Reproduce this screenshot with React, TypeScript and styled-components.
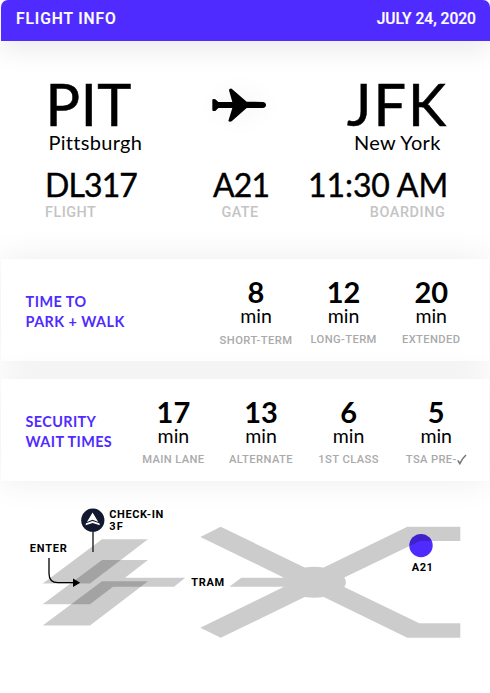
import React from "react";
import styled, { createGlobalStyle } from "styled-components";

const GlobalStyle = createGlobalStyle`
  * { box-sizing: border-box; }
  body { margin: 0; background: #fff; }
`;

const Screen = styled.main`
  width: 490px;
  height: 693px;
  overflow: hidden;
  background: #fff;
  color: #000;
  font-family: Lato, sans-serif;
  display: flex;
  flex-direction: column;
`;

const Header = styled.header`
  flex: none;
  height: 41px;
  padding: 0 13.5px 3px 15.5px;
  margin: 0 0.5px;
  display: flex;
  align-items: center;
  justify-content: space-between;
  background: #4f2bff;
  border-radius: 7px 7px 0 0;
  box-shadow: 0 10px 26px rgba(0, 0, 0, 0.08);
  color: #fff;
`;

const HeaderText = styled.span<{ $spacing: number }>`
  font: 500 15.6px/18px Roboto, sans-serif;
  letter-spacing: ${(p) => p.$spacing}px;
  -webkit-text-stroke: 0.2px currentColor;
`;

const Trip = styled.section`
  flex: none;
  height: 218px;
  padding: 34px 42px 0 45px;
  display: flex;
  flex-direction: column;
`;

const TripRow = styled.div<{ $height: number }>`
  height: ${(p) => p.$height}px;
  display: grid;
  grid-template-columns: 153px 84px 1fr;
  align-items: start;
`;

const Airport = styled.div`
  display: flex;
  flex-direction: column;
  justify-self: start;

  &:last-child {
    justify-self: end;
  }
`;

const Code = styled.span<{ $spacing: number; $indent: number }>`
  font-size: 57.5px;
  line-height: 58px;
  letter-spacing: ${(p) => p.$spacing}px;
  margin-left: ${(p) => p.$indent}px;
  white-space: nowrap;
  -webkit-text-stroke: 0.6px currentColor;
`;

const City = styled.span<{ $spacing: number; $indent: number }>`
  font-size: 20px;
  line-height: 18px;
  letter-spacing: ${(p) => p.$spacing}px;
  margin-left: ${(p) => p.$indent}px;
  white-space: nowrap;
`;

const PlaneHalo = styled.div`
  width: 80px;
  height: 60px;
  margin-left: 2px;
  background: radial-gradient(closest-side, rgba(0, 0, 0, 0.022), rgba(0, 0, 0, 0));
`;

const Detail = styled.div<{ $align: "flex-start" | "center" | "flex-end" }>`
  display: flex;
  flex-direction: column;
  align-items: ${(p) => p.$align};
`;

const DetailValue = styled.span<{ $spacing: number; $indent?: number }>`
  font-size: 32px;
  line-height: 38px;
  letter-spacing: ${(p) => p.$spacing}px;
  margin-left: ${(p) => p.$indent ?? 0}px;
  white-space: nowrap;
  -webkit-text-stroke: 0.4px currentColor;
`;

const DetailLabel = styled.span<{ $spacing: number; $end?: number }>`
  font: 500 14.4px/18px Roboto, sans-serif;
  color: #c4c4c4;
  letter-spacing: ${(p) => p.$spacing}px;
  margin-right: ${(p) => p.$end ?? 0}px;
`;

const Card = styled.section<{ $end: number }>`
  flex: none;
  height: 102px;
  margin: 0 1px 18px;
  padding: 0 ${(p) => p.$end}px 0 24.5px;
  display: flex;
  justify-content: space-between;
  background: #fff;
  box-shadow: 0 0 32px rgba(0, 0, 0, 0.075);
`;

const CardTitle = styled.h2`
  margin: 33px 0 0;
  font-size: 14.4px;
  line-height: 20px;
  font-weight: 700;
  color: #4f2bff;
  white-space: nowrap;
`;

const TitleLine = styled.span<{ $spacing: number }>`
  display: block;
  letter-spacing: ${(p) => p.$spacing}px;
`;

const Stats = styled.div`
  display: flex;
`;

const Stat = styled.div`
  width: 87.6px;
  padding-top: 19px;
  display: flex;
  flex-direction: column;
  align-items: center;
`;

const StatValue = styled.strong`
  font-size: 29px;
  line-height: 28px;
  font-weight: 700;
`;

const StatUnit = styled.span`
  font-size: 19.5px;
  line-height: 20px;
`;

const StatLabel = styled.span<{ $drop: number; $spacing: number }>`
  margin-top: ${(p) => 7 + p.$drop}px;
  font: 500 11.2px/14px Roboto, sans-serif;
  letter-spacing: ${(p) => p.$spacing}px;
  color: #aaa;
  white-space: nowrap;
`;

const Check = styled.svg`
  width: 10px;
  height: 11px;
  vertical-align: -2px;
`;

const MapArea = styled.svg`
  display: block;
  flex: none;
  width: 490px;
  height: 150px;
  margin-top: -4px;
`;

const MapLabel = styled.text`
  font: 700 11px Roboto, sans-serif;
  fill: #000;
`;

type StatData = { value: number; label: string; spacing: number; drop?: number; check?: boolean };

const walkTimes: StatData[] = [
  { value: 8, label: "SHORT-TERM", spacing: 0.45, drop: 1 },
  { value: 12, label: "LONG-TERM", spacing: 0.4 },
  { value: 20, label: "EXTENDED", spacing: 0.4 },
];

const waitTimes: StatData[] = [
  { value: 17, label: "MAIN LANE", spacing: 0.35 },
  { value: 13, label: "ALTERNATE", spacing: 0.45 },
  { value: 6, label: "1ST CLASS", spacing: 0.4 },
  { value: 5, label: "TSA PRE-", spacing: 0.35, check: true },
];

const StatList = ({ items }: { items: StatData[] }) => (
  <Stats>
    {items.map((s) => (
      <Stat key={s.label}>
        <StatValue>{s.value}</StatValue>
        <StatUnit>min</StatUnit>
        <StatLabel $drop={s.drop ?? 0} $spacing={s.spacing}>
          {s.label}
          {s.check && (
            <Check viewBox="0 0 10 11">
              <path d="M0.8 6.4 2.8 9.6 C4.6 6 6.4 3.2 9 1" fill="none" stroke="#777" strokeWidth="1.6" />
            </Check>
          )}
        </StatLabel>
      </Stat>
    ))}
  </Stats>
);

const Plane = () => (
  <PlaneHalo>
    <svg width="80" height="60" viewBox="0 0 240 180">
      <path d="M37 75 Q37 72 41 72 L46 73 L55 81 L97 81 L87 46 Q87 40 95 41 L140 80 L188 81 Q198 82 198 90 Q198 98 188 99 L140 99 L95 139 Q89 142 85 138 L97 99 L55 99 L46 108 L40 108 Q37 108 37 104 Z" />
    </svg>
  </PlaneHalo>
);

const TerminalMap = () => (
  <MapArea viewBox="0 495 490 150">
    <circle cx="421" cy="545.6" r="11.7" fill="#4f2bff" />
    <path
      fillOpacity="0.2"
      d="M220.7 526.8 L304.7 567.4 A31.5 15.2 0 0 1 323.7 567.4 L407.3 526.8 H460.3 V541 H420 L344.3 577.6 A31 15 0 0 1 344.3 587 L419.3 623.3 H460.3 V637.8 H407.3 L323.7 597 A31.5 15.2 0 0 1 304.7 597 L220.7 637.8 L200.3 627.7 L284 586.7 H229.3 L241.3 577.7 H284 L200.3 536.9 Z"
    />
    <g fillOpacity="0.2">
      <path d="M102 539.2 H148 L90 583.6 H42.7 Z" />
      <path d="M102 560 H148 L125 577.7 H185.3 L174 586.7 H113 L90 604.3 H42.7 Z" />
      <path d="M102 581.2 H148 L90 625.4 H42.7 Z" />
    </g>
    <path d="M93 530 V552" stroke="#222" strokeWidth="1.4" />
    <circle cx="92.8" cy="520.2" r="11.6" fill="#111830" />
    <path d="M92.6 512.6 L98.3 521.9 L92.6 519.7 L86.9 521.9 Z M86 523.3 L92.6 520.9 L99.4 523.3 L99.8 525.2 L92.6 523 L85.6 525.2 Z" fill="#fff" />
    <path d="M49 558 V573.5 Q49 582.7 58 582.7 H74" fill="none" stroke="#000" strokeWidth="1.3" />
    <path d="M73 578.4 L80.2 582.7 L73 587 Z" />
    <MapLabel x="109.3" y="517.7" textLength="54">CHECK-IN</MapLabel>
    <MapLabel x="109.3" y="530" textLength="13.5">3F</MapLabel>
    <MapLabel x="29.8" y="551.7" textLength="37">ENTER</MapLabel>
    <MapLabel x="191.2" y="585.8" textLength="33">TRAM</MapLabel>
    <MapLabel x="411.8" y="570.6" textLength="21">A21</MapLabel>
  </MapArea>
);

export default function App() {
  return (
    <Screen>
      <GlobalStyle />
      <Header>
        <HeaderText $spacing={0.9}>FLIGHT INFO</HeaderText>
        <HeaderText $spacing={0}>JULY 24, 2020</HeaderText>
      </Header>
      <Trip>
        <TripRow $height={91}>
          <Airport>
            <Code $spacing={0.6} $indent={0.5}>PIT</Code>
            <City $spacing={0.3} $indent={3.5}>Pittsburgh</City>
          </Airport>
          <Plane />
          <Airport>
            <Code $spacing={2} $indent={0}>JFK</Code>
            <City $spacing={0.3} $indent={7}>New York</City>
          </Airport>
        </TripRow>
        <TripRow $height={60}>
          <Detail $align="flex-start">
            <DetailValue $spacing={-0.9}>DL317</DetailValue>
            <DetailLabel $spacing={0.5}>FLIGHT</DetailLabel>
          </Detail>
          <Detail $align="center">
            <DetailValue $spacing={-0.9} $indent={2}>A21</DetailValue>
            <DetailLabel $spacing={0.4}>GATE</DetailLabel>
          </Detail>
          <Detail $align="flex-end">
            <DetailValue $spacing={-0.1}>11:30 AM</DetailValue>
            <DetailLabel $spacing={0.6} $end={2.5}>BOARDING</DetailLabel>
          </Detail>
        </TripRow>
      </Trip>
      <Card $end={14}>
        <CardTitle>
          <TitleLine $spacing={0.5}>TIME TO</TitleLine>
          <TitleLine $spacing={0.45}>PARK + WALK</TitleLine>
        </CardTitle>
        <StatList items={walkTimes} />
      </Card>
      <Card $end={9}>
        <CardTitle>
          <TitleLine $spacing={0.4}>SECURITY</TitleLine>
          <TitleLine $spacing={0.4}>WAIT TIMES</TitleLine>
        </CardTitle>
        <StatList items={waitTimes} />
      </Card>
      <TerminalMap />
    </Screen>
  );
}
